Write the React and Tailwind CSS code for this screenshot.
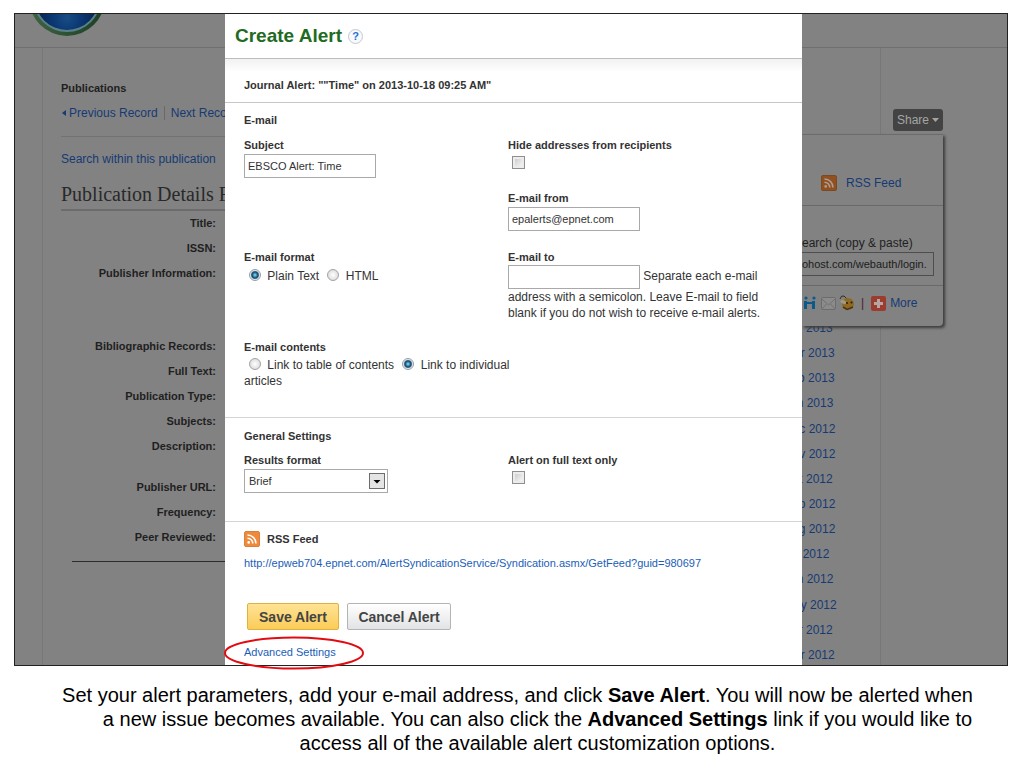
import React, { useState } from 'react';

const DETAILS = [
  { label: 'Title:', height: 'h-[25px]' },
  { label: 'ISSN:', height: 'h-[25px]' },
  { label: 'Publisher Information:', height: 'h-[73px]' },
  { label: 'Bibliographic Records:', height: 'h-[25px]' },
  { label: 'Full Text:', height: 'h-[25px]' },
  { label: 'Publication Type:', height: 'h-[25px]' },
  { label: 'Subjects:', height: 'h-[25px]' },
  { label: 'Description:', height: 'h-[41px]' },
  { label: 'Publisher URL:', height: 'h-[25px]' },
  { label: 'Frequency:', height: 'h-[25px]' },
  { label: 'Peer Reviewed:', height: 'h-[25px]' },
];

const ISSUES = [
  'Apr 2013',
  'Mar 2013',
  'Feb 2013',
  'Jan 2013',
  'Dec 2012',
  'Nov 2012',
  'Oct 2012',
  'Sep 2012',
  'Aug 2012',
  'Jul 2012',
  'Jun 2012',
  'May 2012',
  'Apr 2012',
  'Mar 2012',
];

const labelClasses = 'block text-[11px] font-bold';
const inputClasses = 'border border-[#a9a9a9] bg-white px-[3px] text-[11px] text-[#333] outline-none';
const radioClasses =
  'mr-[3px] ml-[5px] size-[12px] appearance-none rounded-full border border-[#a3a3a3] bg-radial from-white to-[#d2d2d2] align-[-1px] checked:border-[#8f9fa9] checked:from-[#5fc4ee] checked:from-10% checked:via-[#123f5e] checked:via-45% checked:to-[#e8eef2] checked:to-65%';
const checkboxClasses =
  'ml-1 block size-[13px] appearance-none border border-[#8e8f8f] bg-linear-to-br from-[#c4c4c4] to-white shadow-[inset_0_0_0_2px_#ececec] checked:bg-[#123f5e]';

function Logo() {
  return (
    <svg viewBox="0 0 78 23" className="ml-[13px] block h-[23px] w-[78px]" aria-hidden="true">
      <defs>
        <radialGradient id="globe" gradientUnits="userSpaceOnUse" cx="39" cy="4" r="28">
          <stop offset="0" stopColor="#1a4c86" />
          <stop offset="0.5" stopColor="#0b3873" />
          <stop offset="1" stopColor="#082654" />
        </radialGradient>
        <linearGradient id="ring" x1="0" x2="1">
          <stop offset="0" stopColor="#3f6342" />
          <stop offset="1" stopColor="#1c3f25" />
        </linearGradient>
      </defs>
      <circle cx="39" cy="-16" r="38" fill="url(#ring)" />
      <circle cx="39" cy="-16" r="34" fill="#5c8087" />
      <circle cx="39" cy="-16" r="32" fill="url(#globe)" />
    </svg>
  );
}

function RssIcon({ dim }) {
  return (
    <svg viewBox="0 0 16 16" className="size-4 shrink-0" aria-hidden="true">
      <rect x="0.5" y="0.5" width="15" height="15" rx="1.5" fill={dim ? '#93501f' : '#ee8a3c'} stroke={dim ? '#7a4a24' : '#d97f38'} />
      <g fill="none" stroke={dim ? '#a8a09a' : '#fff'} strokeWidth="1.6">
        <path d="M3.5 4A8.5 8.5 0 0 1 12 12.500" />
        <path d="M3.500 7.200A5.300 5.300 0 0 1 8.800 12.500" />
      </g>
      <circle cx="4.700" cy="11.400" r="1.300" fill={dim ? '#a8a09a' : '#fff'} />
    </svg>
  );
}

function ShareIcons() {
  return (
    <svg viewBox="0 0 56 18" className="h-[18px] w-14 shrink-0" aria-hidden="true">
      <g fill="#0b5a8a">
        <circle cx="4" cy="4" r="1.600" />
        <rect x="2" y="7" width="3" height="8" />
        <rect x="5" y="8" width="5" height="2" />
        <circle cx="12" cy="4" r="1.600" />
        <rect x="10" y="7" width="3" height="8" />
      </g>
      <rect x="19.500" y="3.500" width="14" height="12" rx="1" fill="#8b8b8b" stroke="#6c6c6c" />
      <path d="M20 5L26.500 11L33 5M20 15L24.500 10M33 15L28.500 10" fill="none" stroke="#707070" />
      <path d="M38 5Q39 1 42 2L45 5" fill="none" stroke="#33291a" />
      <circle cx="46" cy="10" r="6" fill="#8f6a24" />
      <path d="M38 7Q42 4 45 9Q41 12 38 7Z" fill="#a49a80" />
      <path d="M41 13L45 15.500L51 13" fill="none" stroke="#4a3512" strokeWidth="1.500" />
      <circle cx="45" cy="9" r="1" fill="#2a1c05" />
      <circle cx="49.500" cy="8.500" r="1" fill="#2a1c05" />
    </svg>
  );
}

function PublicationPanel() {
  return (
    <div className="flex flex-col overflow-hidden whitespace-nowrap">
      <div className="h-[34px] border-b border-[#6f6f6f]">
        <Logo />
      </div>
      <div className="ml-[27px] flex-1 border-l border-[#777] pt-8 pl-[18px]">
        <p className="text-[11px] font-bold">Publications</p>
        <div className="mt-[9px] flex h-4 items-center text-[#163a74]">
          <svg viewBox="0 0 4 6" className="mr-[3px] ml-px h-1.5 w-1 shrink-0" aria-hidden="true">
            <path d="M4 0V6L0 3Z" fill="currentColor" />
          </svg>
          <a href="#previous">Previous Record</a>
          <span className="mx-[6px] h-3.5 w-px shrink-0 bg-[#696969]" />
          <a href="#next">Next Recor</a>
        </div>
        <div className="mt-[15px] border-t border-[#727272] pt-[14px]">
          <a href="#search" className="block text-[#163a74]">Search within this publication</a>
        </div>
        <h2 className="mt-4 border-b-2 border-[#6c6c6c] pb-1 font-['Liberation_Serif',serif] text-[20px] leading-[22px] text-[#292929]">
          Publication Details F
        </h2>
        <dl className="pt-1 pr-[9px] text-right text-[11px] font-bold">
          {DETAILS.map((item) => (
            <dt key={item.label} className={item.height}>{item.label}</dt>
          ))}
        </dl>
        <hr className="mt-[7px] ml-[11px] border-[#2c2c2c]" />
      </div>
    </div>
  );
}

function SharePopup() {
  return (
    <div className="absolute inset-x-0 top-[95px] flex flex-col pr-[64px]">
      <button
        type="button"
        className="flex h-[22px] w-[50px] items-center justify-center gap-[3px] self-end rounded-[3px] bg-[#434343] text-[#a5a5a5]"
      >
        Share
        <svg viewBox="0 0 7 4" className="h-1 w-[7px]" aria-hidden="true">
          <path d="M0 0H7L3.500 4Z" fill="currentColor" />
        </svg>
      </button>
      <div className="mt-[3px] h-[192px] rounded-br-[4px] border-t border-[#6c6c6c] bg-[#828282] shadow-[2px_2px_3px_#3c3c3c]">
        <div className="flex h-[71px] items-center gap-[9px] border-b border-[#696969] pt-[26px] pl-[19px] text-[#163a74]">
          <RssIcon dim />
          <a href="#rss">RSS Feed</a>
        </div>
        <div className="flex h-20 flex-col justify-end overflow-hidden border-b border-[#696969] pr-[9px] pb-[9px]">
          <label htmlFor="permalink" className="whitespace-nowrap">earch (copy &amp; paste)</label>
          <input
            id="permalink"
            readOnly
            defaultValue="ohost.com/webauth/login."
            className="mt-px h-6 border border-l-0 border-[#4e4e4e] text-[11px] text-[#1c1c1c] outline-none"
          />
        </div>
        <div className="flex h-[34px] items-center text-[#163a74]">
          <ShareIcons />
          <span className="mr-[7px] ml-[3px] text-[#4a2030]">|</span>
          <svg viewBox="0 0 15 15" className="mr-1 size-[15px]" aria-hidden="true">
            <rect width="15" height="15" rx="2" fill="#9b3c2e" />
            <path d="M7.500 3V12M3 7.500H12" stroke="#b5a6a3" strokeWidth="3" />
          </svg>
          <a href="#more">More</a>
        </div>
      </div>
    </div>
  );
}

function IssuesPanel() {
  return (
    <div className="relative flex flex-col overflow-hidden">
      <div className="h-[34px] border-b border-[#6f6f6f]" />
      <div className="flex w-[79px] flex-1 flex-col justify-end border-r border-[#777]">
        <ul className="-ml-[18px] flex h-[345px] flex-col justify-between pb-0.5 text-[#163a74]">
          {ISSUES.map((issue) => (
            <li key={issue}>
              <a href="#issue">{issue}</a>
            </li>
          ))}
        </ul>
      </div>
      <SharePopup />
    </div>
  );
}

function AlertDialog() {
  const [form, setForm] = useState({
    subject: 'EBSCO Alert: Time',
    from: 'epalerts@epnet.com',
    to: '',
    format: 'plain',
    contents: 'articles',
    results: 'Brief',
  });

  const handleChange = (field) => (event) => {
    setForm((current) => ({ ...current, [field]: event.target.value }));
  };

  return (
    <form role="dialog" aria-label="Create Alert" className="flex min-w-0 flex-col bg-white text-[#333]">
      <header className="flex h-[45px] items-center gap-[6px] border-b border-[#bdbdbd] pl-[10px]">
        <h1 className="text-[19px] leading-6 font-bold text-[#1e6b22]">Create Alert</h1>
        <button
          type="button"
          aria-label="Help"
          className="flex size-[15px] items-center justify-center rounded-full border border-[#c3c9cf] bg-[#f7f9fb] text-[11px] font-bold text-[#2a6fd6]"
        >
          ?
        </button>
      </header>
      <div className="h-11 border-b border-[#c6c6c6] bg-linear-to-b from-[#f1f1f1] to-white to-30% pt-[18px] pl-[19px] text-[11px] font-bold">
        Journal Alert: ""Time" on 2013-10-18 09:25 AM"
      </div>

      <section className="h-[315px] border-b border-[#d4d4d4] pt-[9px] pl-[19px]">
        <h2 className="text-[11px] font-bold">E-mail</h2>
        <div className="mt-[9px] grid grid-cols-[264px_264px] grid-rows-[53px_59px_90px_auto]">
          <div>
            <label htmlFor="subject" className={labelClasses}>Subject</label>
            <input id="subject" value={form.subject} onChange={handleChange('subject')} className={`mt-px h-6 w-[132px] ${inputClasses}`} />
          </div>
          <div>
            <label htmlFor="hide" className={labelClasses}>Hide addresses from recipients</label>
            <input id="hide" type="checkbox" className={`mt-[3px] ${checkboxClasses}`} />
          </div>
          <div className="col-start-2">
            <label htmlFor="from" className={labelClasses}>E-mail from</label>
            <input id="from" value={form.from} onChange={handleChange('from')} className={`mt-px h-6 w-[132px] ${inputClasses}`} />
          </div>
          <div role="radiogroup" aria-label="E-mail format" className="row-start-3">
            <p className={labelClasses}>E-mail format</p>
            <div className="mt-[3px]">
              <label>
                <input type="radio" name="format" value="plain" checked={form.format === 'plain'} onChange={handleChange('format')} className={radioClasses} />
                {' Plain Text '}
              </label>
              <label>
                <input type="radio" name="format" value="html" checked={form.format === 'html'} onChange={handleChange('format')} className={radioClasses} />
                {' HTML'}
              </label>
            </div>
          </div>
          <div className="row-start-3">
            <label htmlFor="to" className={labelClasses}>E-mail to</label>
            <p className="w-[260px]">
              <input id="to" value={form.to} onChange={handleChange('to')} className={`h-6 w-[132px] align-middle ${inputClasses}`} />
              {' Separate each e-mail address with a semicolon. Leave E-mail to field blank if you do not wish to receive e-mail alerts.'}
            </p>
          </div>
          <div role="radiogroup" aria-label="E-mail contents" className="row-start-4">
            <p className={labelClasses}>E-mail contents</p>
            <div className="mt-[2px] -mr-2">
              <label>
                <input type="radio" name="contents" value="table" checked={form.contents === 'table'} onChange={handleChange('contents')} className={radioClasses} />
                {' Link to table of contents '}
              </label>
              <label>
                <input type="radio" name="contents" value="articles" checked={form.contents === 'articles'} onChange={handleChange('contents')} className={radioClasses} />
                {' Link to individual articles'}
              </label>
            </div>
          </div>
        </div>
      </section>

      <section className="h-[104px] border-b border-[#d4d4d4] pt-[10px] pl-[19px]">
        <h2 className="text-[11px] font-bold">General Settings</h2>
        <div className="mt-2 grid grid-cols-[264px_264px]">
          <div>
            <label htmlFor="results" className={labelClasses}>Results format</label>
            <div className="relative mt-px w-[144px]">
              <select
                id="results"
                value={form.results}
                onChange={handleChange('results')}
                className="h-6 w-full appearance-none border border-[#a9a9a9] bg-white px-1 text-[11px] outline-none"
              >
                <option>Brief</option>
                <option>Detailed</option>
              </select>
              <svg viewBox="0 0 16 16" className="pointer-events-none absolute top-1 right-[3px] size-4" aria-hidden="true">
                <rect x="0.500" y="0.500" width="15" height="15" fill="#e4e4e4" stroke="#6d6d6d" />
                <path d="M4.500 7H11.500L8 10.500Z" fill="#000" />
              </svg>
            </div>
          </div>
          <div>
            <label htmlFor="fulltext" className={labelClasses}>Alert on full text only</label>
            <input id="fulltext" type="checkbox" className={`mt-[3px] ${checkboxClasses}`} />
          </div>
        </div>
      </section>

      <section className="flex-1 pt-[9px] pl-[19px]">
        <h2 className="flex items-center gap-[7px] text-[11px] font-bold">
          <RssIcon />
          RSS Feed
        </h2>
        <a href="#feed" className="mt-2 block text-[11px] text-[#1a5eb8]">
          http://epweb704.epnet.com/AlertSyndicationService/Syndication.asmx/GetFeed?guid=980697
        </a>
        <div className="mt-8 flex gap-2 pl-[3px] text-[14px] font-bold text-[#444]">
          <button
            type="button"
            className="h-[27px] w-[92px] rounded-[2px] border border-[#e0b040] bg-linear-to-b from-[#fee394] to-[#fbcc56]"
          >
            Save Alert
          </button>
          <button
            type="button"
            className="h-[27px] w-[104px] rounded-[2px] border border-[#b4b4b4] bg-linear-to-b from-white to-[#e2e3e4]"
          >
            Cancel Alert
          </button>
        </div>
        <div className="relative mt-[14px] w-fit text-[11px] text-[#1a5eb8]">
          <a href="#advanced">Advanced Settings</a>
          <svg viewBox="0 0 140 34" className="pointer-events-none absolute -top-2 -left-5 h-[34px] w-[140px]" aria-hidden="true">
            <ellipse cx="70" cy="17" rx="69" ry="15.500" fill="none" stroke="#e30b12" strokeWidth="2" />
          </svg>
        </div>
      </section>
    </form>
  );
}

export default function App() {
  return (
    <main className="bg-white pt-[13px] font-['Liberation_Sans',Arial,sans-serif] text-[12px] leading-4 text-[#1f1f1f]">
      <div className="mr-4 ml-[14px] grid min-h-[653px] grid-cols-[210px_minmax(0,1fr)_205px] border border-[#222] bg-[#828282]">
        <PublicationPanel />
        <AlertDialog />
        <IssuesPanel />
      </div>
      <p className="mt-[17px] pr-[51px] pl-[102px] text-center -indent-10 text-[20px] leading-6 text-black">
        Set your alert parameters, add your e-mail address, and click <b>Save Alert</b>. You will now be alerted when a
        new issue becomes available. You can also click the <b>Advanced Settings</b> link if you would like to access
        all of the available alert customization options.
      </p>
    </main>
  );
}
